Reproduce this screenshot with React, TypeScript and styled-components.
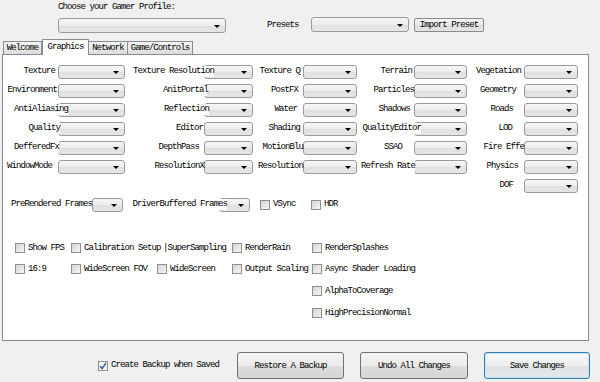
import React from 'react';
import styled, { createGlobalStyle } from 'styled-components';

// tuple: label text, how far the label's right end sits past the combo's left edge
type FieldDef = [string, number];

const columns = [
  { labelWidth: 55, comboWidth: 67 },
  { labelWidth: 79, comboWidth: 49 },
  { labelWidth: 50, comboWidth: 54 },
  { labelWidth: 57, comboWidth: 53 },
  { labelWidth: 57, comboWidth: 54 },
];

const gridRows: (FieldDef | null)[][] = [
  [['Texture', -3], ['Texture Resolution', 10], ['Texture Q', -3], ['Terrain', -2], ['Vegetation', -3]],
  [['Environment', -1], ['AnitPortal', 4], ['PostFX', -5], ['Particles', 0], ['Geometry', -8]],
  [['AntiAliasing', 10], ['Reflection', 5], ['Water', -6], ['Shadows', -4], ['Roads', -11]],
  [['Quality', 2], ['Editor', -1], ['Shading', -3], ['QualityEditor', 7], ['LOD', -12]],
  [['DefferedFx', 1], ['DepthPass', -5], ['MotionBlu', 0], ['SSAO', -12], ['Fire Effe', 0]],
  [['WindowMode', -6], ['ResolutionX', 0], ['Resolution', 0], ['Refresh Rate', 1], ['Physics', -6]],
  [null, null, null, null, ['DOF', -11]],
];

const checkRows: (string | null)[][] = [
  ['Show FPS', 'Calibration Setup', '|SuperSampling', 'RenderRain', 'RenderSplashes'],
  ['16:9', 'WideScreen FOV', 'WideScreen', 'Output Scaling', 'Async Shader Loading'],
  [null, null, null, null, 'AlphaToCoverage'],
  [null, null, null, null, 'HighPrecisionNormal'],
];

const tabs = ['Welcome', 'Graphics', 'Network', 'Game/Controls'];
const tabWidths = [39, 47, 39, 65];

const App: React.FC = () => {
  return (
    <>
      <GlobalStyle />
      <Window>
        <Header>
          <ProfileGroup>
            <Caption>Choose your Gamer Profile:</Caption>
            <Combo $w={168} $h={15} />
          </ProfileGroup>
          <PresetGroup>
            <PresetLabel>Presets</PresetLabel>
            <Combo $w={98} $h={15} />
            <SmallButton>Import Preset</SmallButton>
          </PresetGroup>
        </Header>

        <TabStrip>
          {tabs.map((t, i) => (
            <Tab key={t} $active={i === 1} $w={tabWidths[i]}>
              {t}
            </Tab>
          ))}
        </TabStrip>

        <Panel>
          <ComboGrid>
            {gridRows.map((row, r) =>
              row.map((f, c) =>
                f ? (
                  <Field key={`${r}-${c}`}>
                    <FieldLabel $w={columns[c].labelWidth} $shift={f[1]}>
                      {f[0]}
                    </FieldLabel>
                    <Combo $w={columns[c].comboWidth} />
                  </Field>
                ) : (
                  <span key={`${r}-${c}`} />
                ),
              ),
            )}
          </ComboGrid>

          <FrameRow>
            <Field>
              <FieldLabel $w={82} $shift={0}>PreRendered Frames</FieldLabel>
              <Combo $w={31} />
            </Field>
            <Field>
              <FieldLabel $w={96} $shift={8}>DriverBuffered Frames</FieldLabel>
              <Combo $w={31} />
            </Field>
            <CheckItem $ml={10} $w={51}>
              <Box />
              <span>VSync</span>
            </CheckItem>
            <CheckItem>
              <Box />
              <span>HDR</span>
            </CheckItem>
          </FrameRow>

          <CheckGrid>
            {checkRows.map((row, r) =>
              row.map((label, c) =>
                label === null ? (
                  <span key={`${r}-${c}`} />
                ) : label.startsWith('|') ? (
                  <SideNote key={`${r}-${c}`}>{label}</SideNote>
                ) : (
                  <CheckItem key={`${r}-${c}`}>
                    <Box />
                    <span>{label}</span>
                  </CheckItem>
                ),
              ),
            )}
          </CheckGrid>
        </Panel>

        <Footer>
          <CheckItem>
            <Box $checked>
              <svg width="8" height="8" viewBox="0 0 8 8">
                <path d="M1.2 4.2 L3.1 6.6 L7 0.9" fill="none" stroke="#2b4f9e" strokeWidth="1.4" />
              </svg>
            </Box>
            <span>Create Backup when Saved</span>
          </CheckItem>
          <ButtonRow>
            <Button $w={107}>Restore A Backup</Button>
            <Button $w={108}>Undo All Changes</Button>
            <Button $w={106} $primary>Save Changes</Button>
          </ButtonRow>
        </Footer>
      </Window>
    </>
  );
};

export default App;

// Styled-components
const GlobalStyle = createGlobalStyle`
  html, body {
    margin: 0;
    padding: 0;
    background: #f0f0f0;
  }
  body {
    font-family: 'Liberation Mono', 'Courier New', monospace;
    font-size: 9px;
    letter-spacing: -0.9px;
    color: #000;
  }
`;

const Window = styled.div`
  width: 600px;
  height: 382px;
  overflow: hidden;
  background: #f0f0f0;
`;

const Header = styled.div`
  display: flex;
  align-items: flex-end;
  height: 33px;
  padding-left: 58px;
`;

const ProfileGroup = styled.div`
  display: flex;
  flex-direction: column;
  gap: 5px;
`;

const Caption = styled.div`
  height: 12px;
  line-height: 12px;
`;

const PresetGroup = styled.div`
  display: flex;
  align-items: center;
  margin-left: 41px;
  margin-bottom: 1px;
`;

const PresetLabel = styled.span`
  width: 44px;
`;

const SmallButton = styled.div`
  width: 70px;
  height: 14px;
  box-sizing: border-box;
  margin-left: 5px;
  border: 1px solid #8a8a8a;
  border-radius: 2px;
  background: linear-gradient(#f6f6f6, #e9e9e9 50%, #dedede 51%, #e4e4e4);
  display: flex;
  align-items: center;
  justify-content: center;
  line-height: 12px;
`;

const TabStrip = styled.div`
  display: flex;
  align-items: flex-end;
  height: 15px;
  margin-top: 6px;
  padding-left: 3px;
`;

const Tab = styled.div<{ $active?: boolean; $w: number }>`
  position: relative;
  z-index: ${({ $active }) => ($active ? 2 : 1)};
  width: ${({ $w }) => $w}px;
  height: ${({ $active }) => ($active ? 16 : 13)}px;
  margin-bottom: ${({ $active }) => ($active ? -1 : 0)}px;
  box-sizing: border-box;
  border: 1px solid #898c95;
  border-bottom: none;
  border-left-width: ${({ $active }) => ($active ? 1 : 0)}px;
  background: ${({ $active }) =>
    $active ? '#ffffff' : 'linear-gradient(#f4f4f4, #e6e6e6 60%, #dcdcdc)'};
  display: flex;
  justify-content: center;
  align-items: ${({ $active }) => ($active ? 'flex-start' : 'center')};
  padding-top: ${({ $active }) => ($active ? 1 : 0)}px;
  line-height: 12px;
  &:first-child {
    border-left-width: 1px;
  }
`;

const Panel = styled.div`
  width: 587px;
  height: 287px;
  margin-left: 2px;
  box-sizing: border-box;
  border: 1px solid #898c95;
  background: #ffffff;
  padding-top: 7px;
`;

const ComboGrid = styled.div`
  display: grid;
  grid-template-columns: 122px 128px 104px 110px 111px;
  grid-auto-rows: 19px;
`;

const Field = styled.div`
  display: flex;
  align-items: center;
  height: 19px;
`;

const FieldLabel = styled.span<{ $w: number; $shift: number }>`
  position: relative;
  z-index: 1;
  flex-shrink: 0;
  width: ${({ $w, $shift }) => $w + $shift}px;
  margin-right: ${({ $shift }) => -$shift}px;
  text-align: right;
  white-space: nowrap;
  line-height: 11px;
  background: #ffffff;
`;

const Combo = styled.div<{ $w: number; $h?: number }>`
  position: relative;
  flex-shrink: 0;
  width: ${({ $w }) => $w}px;
  height: ${({ $h }) => $h ?? 14}px;
  box-sizing: border-box;
  border: 1px solid #9a9a9a;
  border-radius: 3px;
  background: linear-gradient(#f7f7f7, #ececec 50%, #e0e0e0 52%, #e6e6e6);

  &::after {
    content: '';
    position: absolute;
    right: 5px;
    top: 50%;
    margin-top: -1px;
    border-left: 3px solid transparent;
    border-right: 3px solid transparent;
    border-top: 3px solid #000;
  }
`;

const FrameRow = styled.div`
  display: flex;
  align-items: center;
  height: 19px;
  padding-left: 7px;
`;

const CheckItem = styled.div<{ $ml?: number; $w?: number }>`
  display: flex;
  align-items: center;
  gap: 3px;
  white-space: nowrap;
  margin-left: ${({ $ml }) => $ml ?? 0}px;
  width: ${({ $w }) => ($w ? `${$w}px` : 'auto')};
  line-height: 11px;
`;

const Box = styled.span<{ $checked?: boolean }>`
  flex-shrink: 0;
  width: 10px;
  height: 10px;
  box-sizing: border-box;
  border: 1px solid #8e8f8f;
  background: ${({ $checked }) =>
    $checked ? '#f4f4f4' : 'linear-gradient(135deg, #d6d6d6, #f5f5f5)'};
  display: flex;
  align-items: center;
  justify-content: center;
`;

const CheckGrid = styled.div`
  display: grid;
  grid-template-columns: 56px 86px 75px 80px auto;
  grid-template-rows: 20px 22px 22px 22px;
  align-items: center;
  margin-top: 24px;
  padding-left: 12px;
`;

const SideNote = styled.span`
  margin-left: 6px;
  white-space: nowrap;
`;

const Footer = styled.div`
  display: flex;
  align-items: center;
  padding: 11px 0 0 98px;
`;

const ButtonRow = styled.div`
  display: flex;
  gap: 16px;
  margin-left: 18px;
`;

const Button = styled.div<{ $w: number; $primary?: boolean }>`
  width: ${({ $w }) => $w}px;
  height: 27px;
  box-sizing: border-box;
  border: 1px solid ${({ $primary }) => ($primary ? '#3c7fb1' : '#707070')};
  border-radius: 3px;
  background: ${({ $primary }) =>
    $primary
      ? 'linear-gradient(#f7f9fa, #eceeef 50%, #dfe2e4 51%, #e6e9eb)'
      : 'linear-gradient(#f4f4f4, #ebebeb 50%, #dddddd 51%, #d4d4d4)'};
  box-shadow: ${({ $primary }) => ($primary ? 'inset 0 0 0 1px #bde3f7' : 'none')};
  display: flex;
  align-items: center;
  justify-content: center;
`;
